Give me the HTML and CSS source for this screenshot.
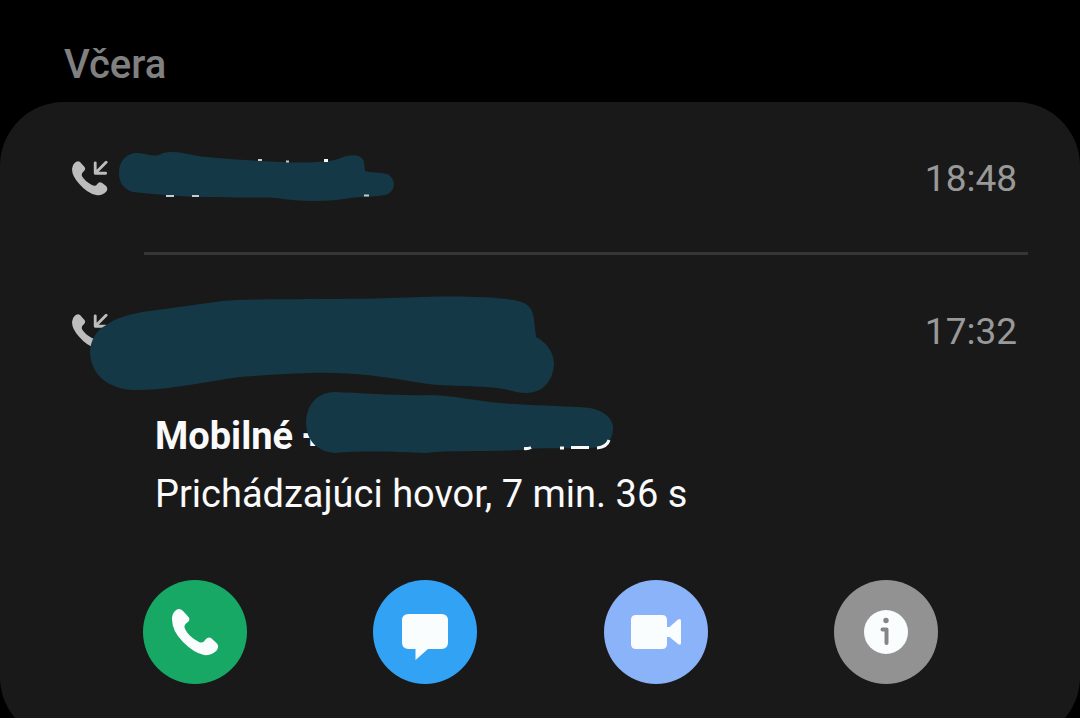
FILE: index.html
```html
<!DOCTYPE html>
<html lang="sk">
<head>
<meta charset="utf-8">
<meta name="viewport" content="width=device-width, initial-scale=1">
<title>História hovorov</title>
<link rel="stylesheet" href="styles.css">
</head>
<body>
<svg class="symbols" aria-hidden="true">
  <symbol id="incoming" viewBox="0 0 38 38">
    <path class="incoming-phone" d="M3 3Q5.500 .3 8.500 2L13 7Q14.800 9 13 11.300Q9.500 14 10.500 17Q13 22 21 26.500Q25 28.500 26.500 25.500Q28.500 22.500 31.500 24L36 27.500Q38.500 30.500 36 33.500Q32 38 25.500 37Q16 35 7.500 25Q0 17 0 9.500Q0 5.500 3 3Z"/>
    <path class="incoming-arrow" d="M36 2.500L25 13.500M24.500 3V14H35.500"/>
  </symbol>
</svg>
<main class="log">
  <h2 class="day">Včera</h2>
  <ul class="card">
    <li class="call">
      <div class="call-line">
        <svg class="incoming" role="img" aria-label="Prichádzajúci hovor"><use href="#incoming"/></svg>
        <time class="time">18:48</time>
      </div>
      <svg class="scribble scribble-short" viewBox="116 148 284 56" aria-hidden="true">
        <path class="ink" d="M119 173C119 161 126 153 138 153C146 153 154 158 161 154C168 151 178 152 188 154C204 158 230 159 260 161C290 163 325 164 341 158C350 154 362 154 364 162L365 171C370 173 380 172 387 174C396 178 396 190 388 194C381 197 365 196 350 198C330 202 300 202 276 198C250 197 205 198 180 196C160 195 145 193 133 192C123 189 119 182 119 173Z"/>
        <path class="trace" d="M258 160H262M286 161.500H289M166 196H174M192 196H199M364 195.500H369"/>
        <path class="trace trace-bright" d="M324 160.500H328"/>
      </svg>
    </li>
    <li class="call">
      <div class="call-line">
        <svg class="incoming" role="img" aria-label="Prichádzajúci hovor"><use href="#incoming"/></svg>
        <time class="time">17:32</time>
      </div>
      <div class="details">
        <p class="number">Mobilné +</p>
        <p class="summary">Prichádzajúci hovor, 7 min. 36 s</p>
      </div>
      <div class="actions">
        <button class="action action-call" type="button" aria-label="Zavolať">
          <svg class="glyph" viewBox="0 0 104 104"><path d="M32 31Q36 27 40 31L45.500 37Q47.500 39.500 45 42Q40 45 42 49Q46 57 56 62Q60 64 62.500 59.500Q65 56.500 68 58L73.500 63Q76.500 66 74 70Q69 76 61 75Q51 73 40 62Q29 51 29 39Q29 34 32 31Z"/></svg>
        </button>
        <button class="action action-message" type="button" aria-label="Správa">
          <svg class="glyph" viewBox="0 0 104 104"><path d="M35.500 34H68.500Q75 34 75 40.500V62.500Q75 69 68.500 69H55L42.500 80V69H35.500Q29 69 29 62.500V40.500Q29 34 35.500 34Z"/></svg>
        </button>
        <button class="action action-video" type="button" aria-label="Videohovor">
          <svg class="glyph" viewBox="0 0 104 104"><path d="M32 35H58Q63 35 63 40V47H65.500L74 39.500Q77 38 77 41V63Q77 66 74 64L65.500 57H63V64Q63 69 58 69H32Q27 69 27 64V40Q27 35 32 35Z"/></svg>
        </button>
        <button class="action action-info" type="button" aria-label="Podrobnosti">
          <svg class="glyph" viewBox="0 0 104 104"><circle cx="52" cy="52" r="22"/><circle class="info-mark" cx="52" cy="40.500" r="2.700"/><path class="info-stem" d="M48.500 49.500H52.500V63"/></svg>
        </button>
      </div>
      <svg class="scribble scribble-long" viewBox="85 290 535 170" aria-hidden="true">
        <path class="ink" d="M90 353C90 340 97 329 108 324C116 318 128 315 142 312C170 308 196 305 222 301C260 298 340 300 390 298C440 296 490 295 518 301C530 304 533 310 534 320L536 337C546 342 554 352 554 364C553 382 542 393 526 393C515 393 508 389 497 388C470 385 440 387 415 382C380 376 350 372 310 373C280 374 240 376 220 380C190 385 155 391 132 390C107 388 91 374 90 353Z"/>
        <path class="ink" d="M306 422C307 404 317 393 334 392C365 393 400 396 430 395C460 396 485 403 515 404C545 406 570 406 590 408C605 411 614 419 613 430C612 443 604 447 590 448C560 449 540 447 520 450C490 452 450 450 425 453C400 452 365 450 335 453C320 452 306 443 306 422Z"/>
        <path class="trace trace-bright" d="M524 448.500Q528 449 531 447.500M560 448H564M571 447.500H589M597 448Q607 447 609 440"/>
      </svg>
    </li>
  </ul>
</main>
</body>
</html>
```
FILE: styles.css
```css
* {
  box-sizing: border-box;
}

body {
  margin: 0;
  height: 100vh;
  overflow: hidden;
  background: #000;
  color: #fafafa;
  font-family: Roboto, "Noto Sans", sans-serif;
  font-size: 38px;
}

.symbols {
  position: absolute;
  width: 0;
  height: 0;
}

.day {
  margin: 0;
  padding: 42px 64px 14px;
  color: #808080;
  font-size: 40px;
  font-weight: 500;
  line-height: 46px;
}

.card {
  margin: 0;
  padding: 0 0 57px;
  list-style: none;
  background: #191919;
  border-radius: 64px;
}

.call {
  position: relative;
  padding-top: 55px;
}

.call + .call::before {
  content: "";
  position: absolute;
  top: -3px;
  left: 144px;
  right: 52px;
  height: 3px;
  background: #353535;
}

.call:first-child {
  padding-bottom: 54px;
}

.call-line {
  display: flex;
  align-items: center;
  justify-content: space-between;
  padding: 0 63px 0 72px;
}

.incoming {
  width: 36px;
  height: 36px;
  margin-bottom: 2px;
}

.incoming-phone {
  fill: #bdbdbd;
}

.incoming-arrow {
  fill: none;
  stroke: #bdbdbd;
  stroke-width: 3;
  stroke-linecap: round;
  stroke-linejoin: round;
}

.time {
  color: #999;
  font-size: 37px;
  line-height: 44px;
}

.details {
  margin-top: 53px;
  padding: 0 64px 0 155px;
  line-height: 58px;
}

.number,
.summary {
  margin: 0;
}

.number {
  font-weight: 700;
}

.actions {
  display: flex;
  justify-content: space-between;
  margin-top: 57px;
  padding: 0 142px 0 143px;
}

.action {
  width: 104px;
  height: 104px;
  padding: 0;
  border: 0;
  border-radius: 50%;
  cursor: pointer;
}

.action-call {
  background: #18a866;
}

.action-message {
  background: #32a2f4;
}

.action-video {
  background: #8ab3f9;
}

.action-info {
  background: #929292;
}

.glyph {
  display: block;
  width: 100%;
  height: 100%;
  fill: #fafdfd;
}

.glyph .info-mark {
  fill: #858585;
}

.info-stem {
  fill: none;
  stroke: #858585;
  stroke-width: 4;
  stroke-linecap: round;
  stroke-linejoin: round;
}

.scribble {
  position: absolute;
  pointer-events: none;
}

.scribble-short {
  top: 46px;
  left: 116px;
  width: 284px;
  height: 56px;
}

.scribble-long {
  top: 35px;
  left: 85px;
  width: 535px;
  height: 170px;
}

.ink {
  fill: #153846;
}

.trace {
  fill: none;
  stroke: #c5cccf;
  stroke-width: 2;
}

.trace-bright {
  stroke: #fafafa;
  stroke-width: 3;
}
```
